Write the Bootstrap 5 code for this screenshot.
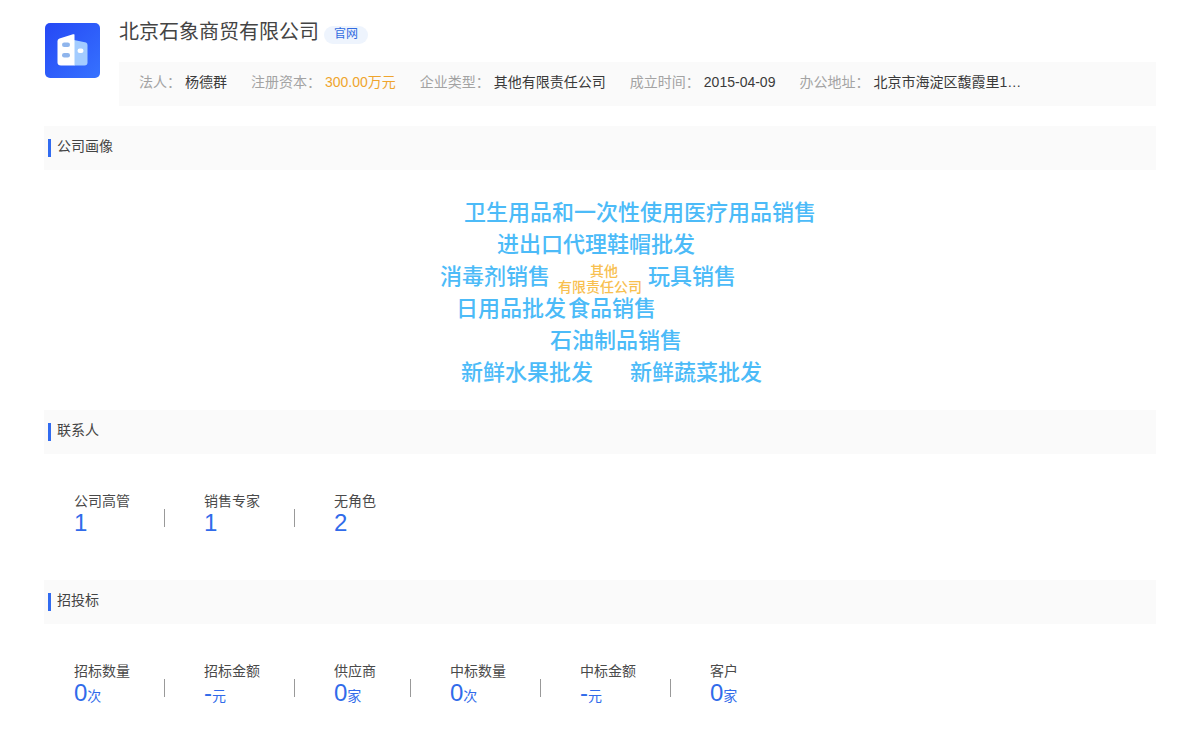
<!DOCTYPE html>
<html lang="zh-CN">
<head>
<meta charset="utf-8">
<meta name="viewport" content="width=device-width, initial-scale=1">
<title>北京石象商贸有限公司</title>
<link href="https://cdn.jsdelivr.net/npm/bootstrap@5.3.0/dist/css/bootstrap.min.css" rel="stylesheet">
<script src="https://cdn.jsdelivr.net/npm/bootstrap@5.3.0/dist/js/bootstrap.bundle.min.js" defer></script>
<style>
  body { font-family: "Liberation Sans", "Noto Sans CJK SC", sans-serif; font-size: 14px; line-height: 20px; color: #4a4a4a; background: #fff; }
  .page { padding: 20px 44px; }
  .logo { width: 56px; height: 56px; margin-top: 2px; }
  .header-main { margin-left: 19px; }
  .company-name { font-size: 20px; line-height: 24px; font-weight: 400; color: #444; }
  .site-link { font-size: 12px; line-height: 16px; padding: 0 10px 2px; margin: 6px 0 0 5px; color: #316be0; background: #eef4fd; }
  .band { background: #fafafa; }
  .facts { gap: 24px; padding: 10px 20px 14px; margin-top: 18px; }
  .facts dt { color: #a3a3a3; font-weight: 400; margin-right: 4px; }
  .facts dd { color: #3a3a3a; }
  .facts .money { color: #efa52e; }
  .section-title { font-size: 14px; line-height: 20px; font-weight: 400; padding: 10px 4px 13px; color: #444; }
  .section-title::before { content: ""; width: 3px; height: 18px; margin: 3px 6px 0 0; background: #316bf0; }
  .cloud { width: 400px; height: 240px; }
  .cloud li { position: absolute; left: var(--x); top: var(--y); white-space: nowrap; font-size: 22px; line-height: 32px; font-weight: 500; color: #4cbbf8; }
  .cloud .core { font-size: 14px; line-height: 16px; color: #f8c050; text-align: center; }
  .core span { padding-left: 8px; }
  .stats { padding: 36px 30px; min-height: 126px; }
  .stat dt { line-height: 22px; font-weight: 400; color: #4a4a4a; }
  .stat dd { font-size: 14px; line-height: 22px; color: #316bea; }
  .stat dd b { font-size: 24px; font-weight: 400; }
  .stat + .stat { margin-left: 34px; }
  .stat + .stat::before { content: ""; width: 1px; height: 18px; margin: 19px 39px 0 0; background: #999; }
</style>
</head>
<body>
<main class="page container-fluid">
  <header class="d-flex">
    <svg class="logo flex-shrink-0" viewBox="0 0 56 56" role="img" aria-label="公司">
      <defs><linearGradient id="lg" x1="0" y1="0" x2="1" y2="1"><stop offset="0" stop-color="#2548f5"/><stop offset="1" stop-color="#3672ff"/></linearGradient></defs>
      <rect x="1" y="1" width="55" height="55" rx="5" fill="url(#lg)"/>
      <path d="M30 18 42 20.500Q43.500 21 43.500 23V40.500Q43.500 43.500 40.500 43.500H30Z" fill="#a3ccff"/>
      <path d="M30.500 12.500V43.500H17Q13.500 43.500 13.500 40.500V19Q13.500 17 15.500 16.400L29 12.300Q30.500 12 30.500 12.500Z" fill="#fff"/>
      <rect x="18" y="20.500" width="8" height="4.500" rx="2.200" fill="#8fb5ec"/>
      <rect x="18" y="31" width="8" height="4.500" rx="2.200" fill="#8fb5ec"/>
      <rect x="33.500" y="26.500" width="6" height="4.500" rx="2.200" fill="#fff"/>
    </svg>
    <div class="flex-grow-1 header-main">
      <div class="d-flex align-items-start">
        <h1 class="company-name mb-0">北京石象商贸有限公司</h1>
        <a class="site-link rounded-pill text-decoration-none" href="#">官网</a>
      </div>
      <div class="facts band d-flex">
        <dl class="d-flex mb-0"><dt>法人：</dt><dd class="mb-0">杨德群</dd></dl>
        <dl class="d-flex mb-0"><dt>注册资本：</dt><dd class="mb-0 money">300.00万元</dd></dl>
        <dl class="d-flex mb-0"><dt>企业类型：</dt><dd class="mb-0">其他有限责任公司</dd></dl>
        <dl class="d-flex mb-0"><dt>成立时间：</dt><dd class="mb-0">2015-04-09</dd></dl>
        <dl class="d-flex mb-0"><dt>办公地址：</dt><dd class="mb-0">北京市海淀区馥霞里1…</dd></dl>
      </div>
    </div>
  </header>

  <section class="mt-3 pt-1">
    <h2 class="section-title band d-flex mb-0">公司画像</h2>
    <ul class="cloud position-relative mx-auto mb-0 p-0 list-unstyled">
      <li style="--x:64px;--y:27px">卫生用品和一次性使用医疗用品销售</li>
      <li style="--x:97px;--y:59px">进出口代理鞋帽批发</li>
      <li style="--x:40px;--y:91px">消毒剂销售</li>
      <li class="core" style="--x:158px;--y:93px"><span>其他</span><br>有限责任公司</li>
      <li style="--x:248px;--y:91px">玩具销售</li>
      <li style="--x:56px;--y:123px">日用品批发</li>
      <li style="--x:168px;--y:123px">食品销售</li>
      <li style="--x:150px;--y:155px">石油制品销售</li>
      <li style="--x:61px;--y:187px">新鲜水果批发</li>
      <li style="--x:230px;--y:187px">新鲜蔬菜批发</li>
    </ul>
  </section>

  <section>
    <h2 class="section-title band d-flex mb-0">联系人</h2>
    <div class="stats d-flex">
      <div class="stat d-flex"><dl class="mb-0"><dt>公司高管</dt><dd class="mb-0"><b>1</b></dd></dl></div>
      <div class="stat d-flex"><dl class="mb-0"><dt>销售专家</dt><dd class="mb-0"><b>1</b></dd></dl></div>
      <div class="stat d-flex"><dl class="mb-0"><dt>无角色</dt><dd class="mb-0"><b>2</b></dd></dl></div>
    </div>
  </section>

  <section>
    <h2 class="section-title band d-flex mb-0">招投标</h2>
    <div class="stats d-flex pb-0">
      <div class="stat d-flex"><dl class="mb-0"><dt>招标数量</dt><dd class="mb-0"><b>0</b>次</dd></dl></div>
      <div class="stat d-flex"><dl class="mb-0"><dt>招标金额</dt><dd class="mb-0"><b>-</b>元</dd></dl></div>
      <div class="stat d-flex"><dl class="mb-0"><dt>供应商</dt><dd class="mb-0"><b>0</b>家</dd></dl></div>
      <div class="stat d-flex"><dl class="mb-0"><dt>中标数量</dt><dd class="mb-0"><b>0</b>次</dd></dl></div>
      <div class="stat d-flex"><dl class="mb-0"><dt>中标金额</dt><dd class="mb-0"><b>-</b>元</dd></dl></div>
      <div class="stat d-flex"><dl class="mb-0"><dt>客户</dt><dd class="mb-0"><b>0</b>家</dd></dl></div>
    </div>
  </section>
</main>
</body>
</html>
